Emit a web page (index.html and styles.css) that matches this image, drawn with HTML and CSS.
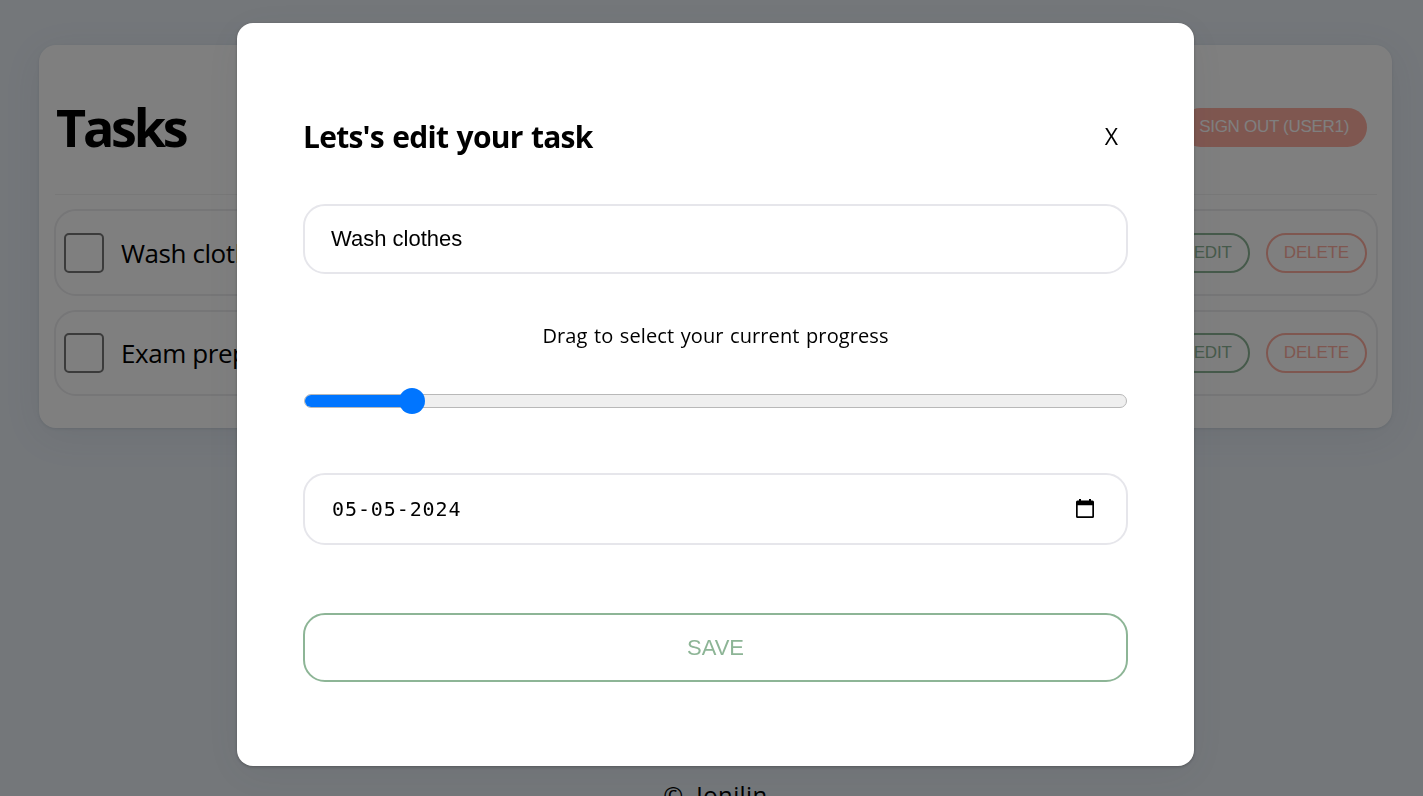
FILE: index.html
```html
<!DOCTYPE html>
<html lang="en">
<head>
<meta charset="utf-8">
<title>Tasks</title>
<link rel="stylesheet" href="styles.css">
</head>
<body>
<div class="app">
  <header class="list-header">
    <h1><span>Tasks</span></h1>
    <button class="signout">SIGN OUT (USER1)</button>
  </header>
  <ul class="list">
    <li class="item">
      <span class="check"></span><p class="item-title">Wash clothes</p>
      <button class="edit">EDIT</button><button class="delete">DELETE</button>
    </li>
    <li class="item">
      <span class="check"></span><p class="item-title">Exam preparation</p>
      <button class="edit">EDIT</button><button class="delete">DELETE</button>
    </li>
  </ul>
</div>
<p class="copyright">© Jonilin</p>
<div class="overlay">
  <form class="modal">
    <div class="modal-header">
      <h3>Lets's edit your task</h3>
      <button class="close" type="button">X</button>
    </div>
    <input class="field" type="text" value="Wash clothes">
    <label class="hint"><span>Drag to select your current progress</span></label>
    <div class="range"><div class="range-fill"></div><div class="range-thumb"></div></div>
    <div class="field date">
      <span>05-05-2024</span>
      <svg class="calendar" width="18" height="20" viewBox="0 0 18 20"><path fill-rule="evenodd" d="M3 0h2v1.500h8V0h2v1.500h1.500a1.500 1.500 0 0 1 1.500 1.500v14.500a1.500 1.500 0 0 1-1.500 1.500h-15A1.500 1.500 0 0 1 0 17.500v-14.500A1.500 1.500 0 0 1 1.500 1.500H3zM1.700 6.300v11h14.600v-11z"/></svg>
    </div>
    <button class="save" type="button">SAVE</button>
  </form>
</div>
</body>
</html>
```
FILE: styles.css
```css
* { box-sizing: border-box; margin: 0; padding: 0; }
html { height: 100%; overflow: hidden; }
body {
  height: 100%;
  overflow: hidden;
  padding: 45px 31px 0 39px;
  background: #e8eef5;
  color: #000;
  font-family: "Trebuchet MS", "Open Sans", "Noto Sans", sans-serif;
}
button { background: none; border: 0; font-family: Arial, "Liberation Sans", sans-serif; white-space: nowrap; }
.app {
  height: 383px;
  padding: 0 14px 0 15px;
  background: #fff;
  border-radius: 17px;
  box-shadow: 0 1px 3px rgba(50, 70, 100, .12), 0 8px 40px rgba(50, 70, 100, .07);
}
.list-header {
  display: flex;
  align-items: center;
  justify-content: space-between;
  height: 150px;
  margin: 0 1px;
  padding: 15px 10px 0 1px;
  border-bottom: 1px solid #f0f0f0;
}
h1 { font-size: 52px; font-weight: 700; line-height: 60px; letter-spacing: -3.2px; }
.signout {
  height: 39px;
  padding: 0 18px;
  border-radius: 20px;
  background: #ffaea0;
  color: #fff;
  font-size: 17px;
  letter-spacing: -.3px;
}
.list { list-style: none; padding-top: 14px; }
.item {
  display: flex;
  align-items: center;
  height: 87px;
  margin-bottom: 14px;
  padding: 0 9px 0 8px;
  border: 2px solid #ececef;
  border-radius: 22px;
}
.item + .item { height: 86px; }
.check { width: 40px; height: 40px; border: 2px solid #767676; border-radius: 5px; margin-right: 17px; }
.item-title { flex: 1; font-size: 26px; line-height: 36px; letter-spacing: -.42px; }
.edit, .delete { height: 40px; padding: 0 16px; border: 2px solid #8db596; border-radius: 20px; color: #8db596; font-size: 17px; letter-spacing: -.15px; }
.delete { margin-left: 16px; border-color: #ffaea0; color: #ffaea0; }
.copyright { margin-top: 349px; text-align: center; font-size: 24px; line-height: 36px; letter-spacing: .4px; word-spacing: 6px; }
.overlay {
  position: fixed;
  inset: 0;
  display: flex;
  justify-content: center;
  padding: 23px 0 0 8px;
  background: rgba(0, 0, 0, .5);
}
.modal {
  display: flex;
  flex-direction: column;
  width: 957px;
  height: 743px;
  padding: 87px 66px 0;
  border-radius: 16px;
  background: #fff;
  box-shadow: 0 1px 3px rgba(0, 0, 0, .25), 0 8px 40px rgba(50, 60, 80, .08);
}
.modal-header { display: flex; justify-content: space-between; align-items: center; height: 54px; padding-right: 9px; }
h3 { font-size: 30px; font-weight: 700; line-height: 40px; letter-spacing: -.75px; word-spacing: 1.3px; }
.close { margin: -3px 1px 0 0; font-size: 23px; font-family: "Trebuchet MS", "Open Sans", sans-serif; line-height: 28px; }
.field {
  flex: none;
  width: 825px;
  height: 70px;
  margin-top: 40px;
  padding: 0 26px;
  border: 2px solid #e6e6eb;
  border-radius: 22px;
  background: #fff;
  font-family: Arial, "Liberation Sans", sans-serif;
  font-size: 22px;
}
.hint { margin-top: 46px; text-align: center; font-size: 20px; line-height: 32px; letter-spacing: .1px; word-spacing: 1.2px; }
.range {
  position: relative;
  height: 14px;
  margin: 42px 1px 0 1px;
  border: 1px solid #b8b8b8;
  border-radius: 7px;
  background: #efefef;
}
.range-fill { width: 108px; height: 12px; border-radius: 6px 0 0 6px; background: #0075ff; }
.range-thumb { position: absolute; left: 94px; top: -7px; width: 26px; height: 26px; border-radius: 50%; background: #0075ff; }
.date {
  display: flex;
  align-items: center;
  justify-content: space-between;
  height: 72px;
  margin-top: 65px;
  padding: 0 32px 0 27px;
  font: 20px Consolas, "DejaVu Sans Mono", monospace;
  letter-spacing: .9px;
}
.save { height: 69px; margin-top: 68px; border: 2px solid #8db596; border-radius: 22px; color: #8db596; font-size: 22px; }
```
